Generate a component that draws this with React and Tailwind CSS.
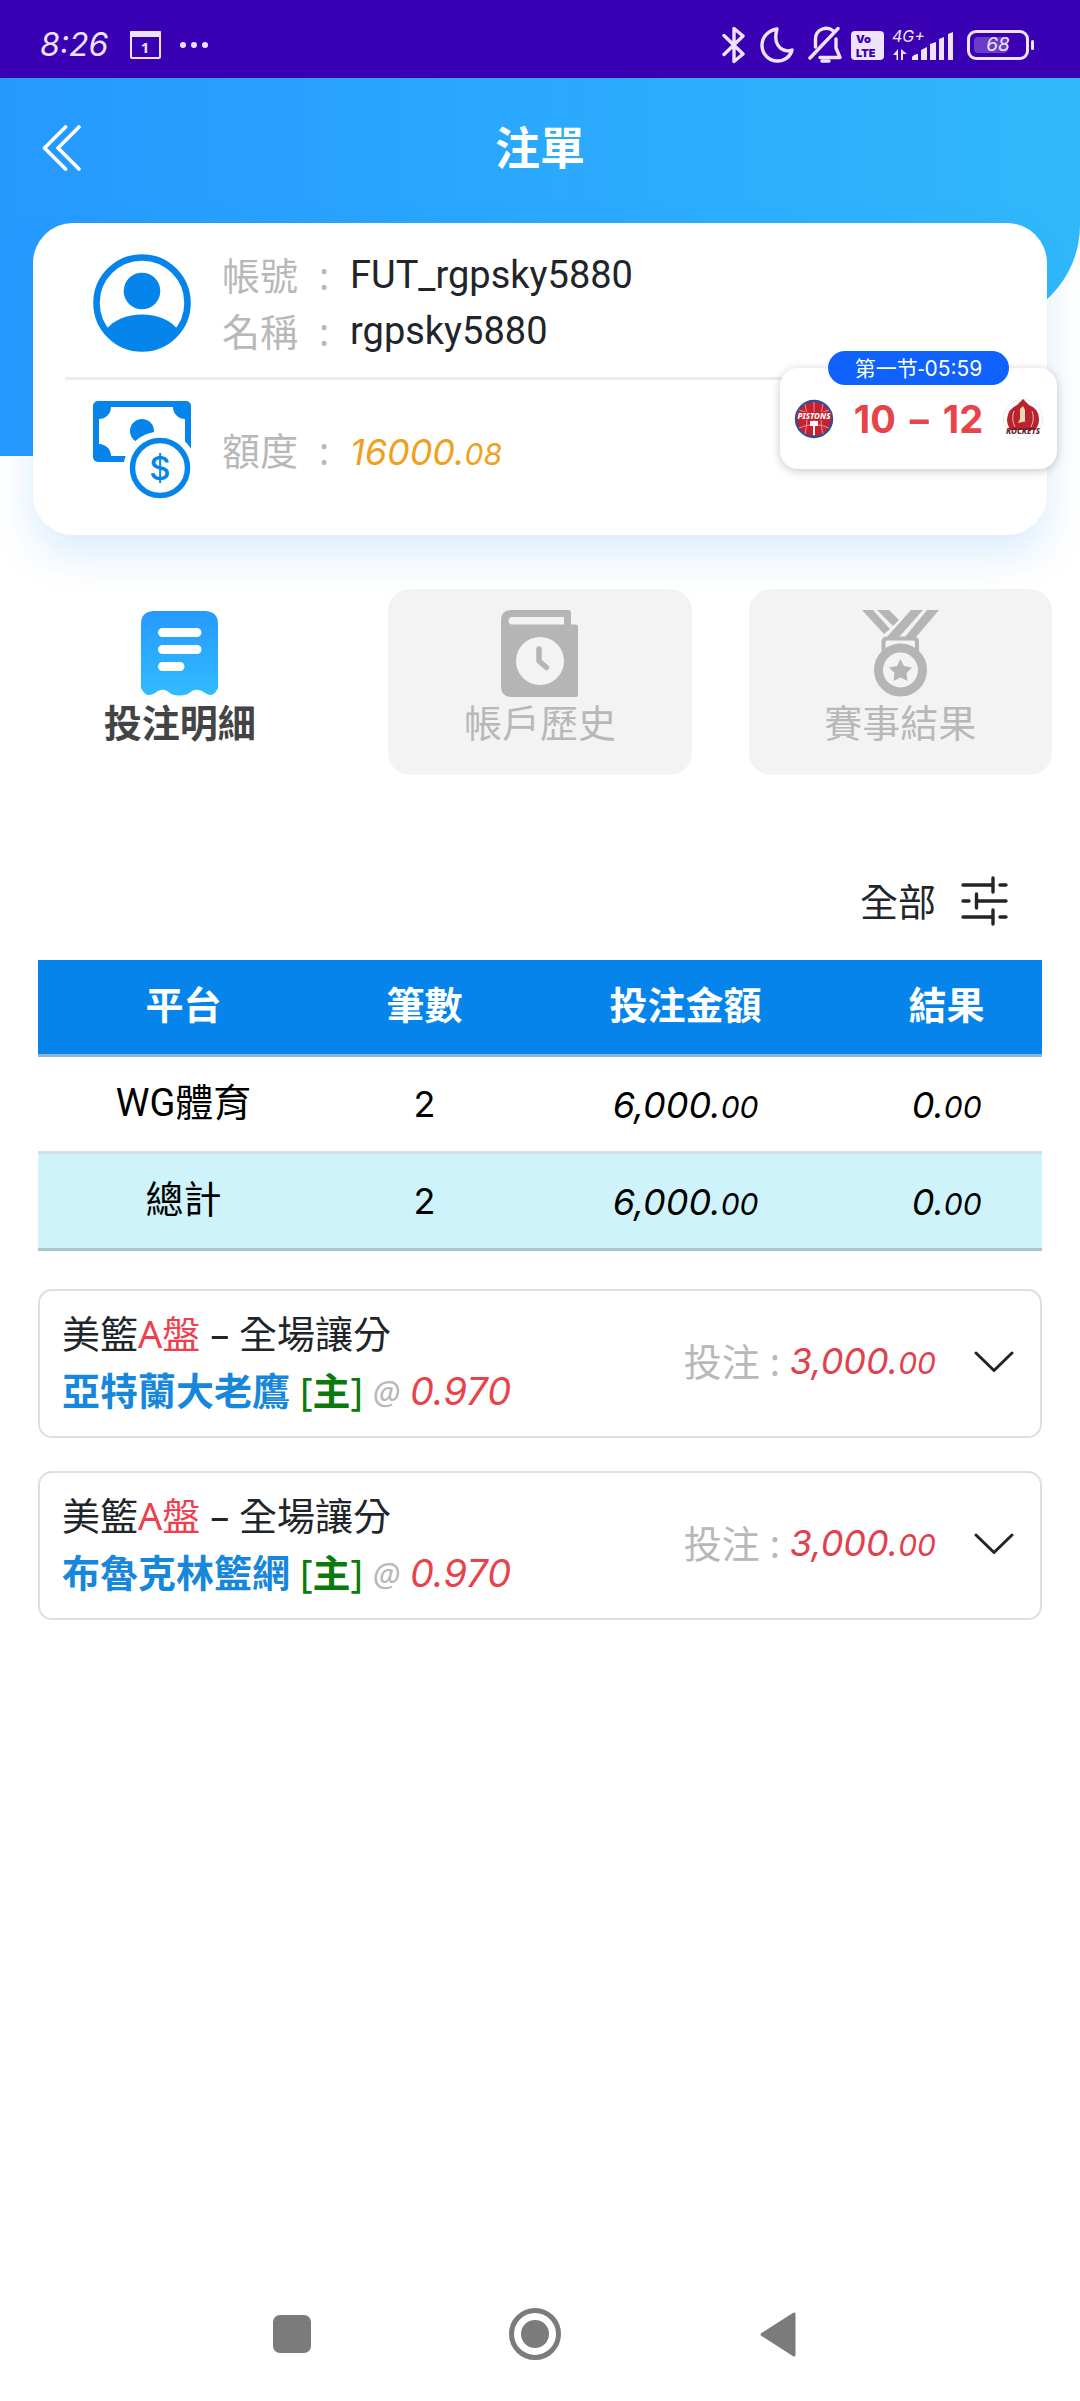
import { useState } from "react"

const tabs = [
    { id: "detail",  label: "投注明細", Icon: ReceiptIcon },
    { id: "history", label: "帳戶歷史", Icon: HistoryIcon },
    { id: "result",  label: "賽事結果", Icon: MedalIcon },
]

const rows = [
    { name: "WG體育", count: 2, amount: "6,000.00", result: "0.00" },
]

const total = { name: "總計", count: 2, amount: "6,000.00", result: "0.00" }

const bets = [
    { id: 1, league: "美籃", market: "A盤", type: "全場讓分", team: "亞特蘭大老鷹", odds: "0.970", stake: "3,000.00" },
    { id: 2, league: "美籃", market: "A盤", type: "全場讓分", team: "布魯克林籃網", odds: "0.970", stake: "3,000.00" },
]

// decimals are printed smaller than the integer part
function Money({ value }) {
    const [whole, cents] = value.split(".")
    return (
        <span className="font-[Inter] text-[36px] italic">
            {whole}.<span className="text-[30px]">{cents}</span>
        </span>
    )
}

function StatusBar() {
    return (
        <div className="h-[78px] pl-10 pr-[46px] pt-[14px] flex items-start justify-between bg-[#3a00b3] text-[#efe3fb]">
            <div className="h-[62px] flex items-center">
                <span className="w-[70px] font-[Inter] text-[32px] leading-[62px] italic">8:26</span>
                <svg className="ml-5 w-[31px] h-7" viewBox="0 0 31 28">
                    <rect x="1" y="1" width="29" height="26" rx="1" fill="none" stroke="currentColor" strokeWidth="2" />
                    <rect x="0" y="0" width="31" height="6" rx="1" fill="currentColor" />
                    <text x="15" y="22" textAnchor="middle" fontSize="15" fontWeight="700" fill="currentColor">1</text>
                </svg>
                <svg className="ml-[18px] w-[30px] h-2" viewBox="0 0 30 8" fill="currentColor">
                    <circle cx="4" cy="4" r="3" />
                    <circle cx="15" cy="4" r="3" />
                    <circle cx="26" cy="4" r="3" />
                </svg>
            </div>
            <div className="h-[62px] flex items-center">
                <svg className="w-6 h-[38px]" viewBox="0 0 24 38" fill="none" stroke="currentColor" strokeWidth="3.4" strokeLinecap="round" strokeLinejoin="round">
                    <path d="M2 9.500 L21 28 L12 35.500 V2.500 L21 10 L2 28.500" />
                </svg>
                <svg className="ml-[14px] w-[34px] h-9" viewBox="0 0 34 36" fill="none" stroke="currentColor" strokeWidth="3.4" strokeLinejoin="round">
                    <path d="M17 2 C8 3.500 2 10 2 18.500 C2 27 9 34 17.500 34 C25 34 30.500 29.500 32 23 C24 26 12 20 17 2 Z" />
                </svg>
                <svg className="ml-[14px] w-[34px] h-[38px]" viewBox="0 0 34 38" fill="none" stroke="currentColor" strokeWidth="3.400" strokeLinecap="round" strokeLinejoin="round">
                    <path d="M25.500 5 C22 2.200 18 1.800 14.500 3 C10 4.600 7.500 8.500 7.500 13 V21" />
                    <path d="M28 13 V22 L32 31.500 H12" />
                    <path d="M2 32 L30 2.500" />
                    <path d="M14 35 H21" />
                </svg>
                <svg className="ml-[9px] w-[33px] h-[29px]" viewBox="0 0 33 29" fontFamily="Inter, sans-serif" fontSize="11" fontWeight="900">
                    <rect width="33" height="29" rx="4" fill="currentColor" />
                    <text x="5" y="12" fill="#3a00b3">Vo</text>
                    <text x="5" y="26" fill="#3a00b3">LTE</text>
                </svg>
                <svg className="ml-2 w-[62px] h-[42px]" viewBox="0 -4 62 42" fill="currentColor">
                    <text x="0" y="14" fontFamily="Inter, sans-serif" fontSize="16" fontStyle="italic">4G+</text>
                    <path d="M6 21 V32 H4.500 V27 L1 27 Z" />
                    <path d="M9 32 V21 L15 26 H11 V32 Z" />
                    <path d="M20 32 V29 Q22 26 26 26 V32 Z" />
                    <path d="M29 32 V22 L35 19 V32 Z" />
                    <path d="M38 32 V16 L44 14 V32 Z" />
                    <path d="M47 32 V11 L52 9 V32 Z" />
                    <path d="M56 32 V6 L61 4 V32 Z" />
                </svg>
                <div className="ml-[13px] w-[62px] h-[30px] p-1 rounded-[9px] border-[3px] border-[#efe3fb] relative">
                    <div className="h-full w-[34px] rounded-[4px] bg-[#6b3cc8]" />
                    <span className="absolute inset-0 font-[Inter] text-center text-[19px] leading-6 italic">68</span>
                </div>
                <div className="ml-[2px] w-[3px] h-[10px] rounded-sm bg-[#efe3fb]" />
            </div>
        </div>
    )
}

function AvatarIcon() {
    return (
        <svg className="w-[98px] h-[98px] shrink-0" viewBox="0 0 98 98">
            <circle cx="49" cy="49" r="45.500" fill="none" stroke="#0585ec" strokeWidth="6.500" />
            <circle cx="49" cy="37" r="18.300" fill="#0585ec" />
            <path d="M13 76 C20 66 34 60.500 49 60.500 C64 60.500 78 66 85 76 C77 89 64 97 49 97 C34 97 21 89 13 76 Z" fill="#0585ec" />
        </svg>
    )
}

function CashIcon() {
    return (
        <svg className="w-[98px] h-[98px] shrink-0" viewBox="0 0 98 98">
            <rect x="0" y="0" width="98" height="61" rx="5" fill="#0585ec" />
            <path d="M18 6 H80 A12 12 0 0 0 92 18 V43 A12 12 0 0 0 80 55 H18 A12 12 0 0 0 6 43 V18 A12 12 0 0 0 18 6 Z" fill="#fff" />
            <circle cx="49" cy="30" r="12" fill="#0585ec" />
            <circle cx="67" cy="67" r="36.500" fill="#fff" />
            <circle cx="67" cy="67" r="27.500" fill="#fff" stroke="#0585ec" strokeWidth="5.500" />
            <text x="67" y="79" textAnchor="middle" fontFamily="Inter, sans-serif" fontSize="33" fontWeight="500" fill="#0585ec">$</text>
        </svg>
    )
}

function ReceiptIcon() {
    return (
        <svg className="w-[77px] h-[87px]" viewBox="0 0 77 87">
            <defs>
                <linearGradient id="receipt" x1="0" y1="0" x2="0" y2="1">
                    <stop offset="0" stopColor="#2699ff" />
                    <stop offset="1" stopColor="#30bcfe" />
                </linearGradient>
            </defs>
            <path d="M12 1 H65 Q77 2 77 14 V78 Q72 89 64 83 Q55 76 47 84 Q38 87 30 84 Q22 76 14 83 Q5 89 0 78 V14 Q0 2 12 1 Z" fill="url(#receipt)" />
            <path d="M21.500 22.500 H56 M21.500 39.500 H56 M21.500 56.500 H39" stroke="#fff" strokeWidth="9" strokeLinecap="round" />
        </svg>
    )
}

function HistoryIcon() {
    return (
        <svg className="w-[77px] h-[87px]" viewBox="0 0 77 87">
            <path d="M10 0 H67 Q70 0 70 3 V14.500 H75 Q77 14.500 77 17 V85 Q77 87 75 87 H10 Q0 86 0 77 V10 Q0 1 10 0 Z" fill="#b5b5b5" />
            <path d="M11 7 H63 V14.500 H11 Q7.500 14 7.500 10.700 Q7.500 7.500 11 7 Z" fill="#f3f3f3" />
            <circle cx="39" cy="51" r="24" fill="#f3f3f3" />
            <path d="M38 39 V51 L45.500 57.500" fill="none" stroke="#b5b5b5" strokeWidth="5.500" strokeLinecap="round" strokeLinejoin="round" />
        </svg>
    )
}

function MedalIcon() {
    return (
        <svg className="w-[77px] h-[87px]" viewBox="0 0 77 87" fill="#b5b5b5">
            <path d="M0 0 H11 L28 19 L22 24 Z" />
            <path d="M15 0 H27 L37 10 L31 16 Z" />
            <path d="M49 0 H61 L37 27 H25 Z" />
            <path d="M65 0 H77 L54 27 H43 Z" />
            <path d="M21.500 42 V32 Q21.500 28.500 25 28.500 H51 Q55 28.500 55 32 V42" fill="none" stroke="#b5b5b5" strokeWidth="4" />
            <circle cx="38.500" cy="60" r="22" fill="#f3f3f3" stroke="#b5b5b5" strokeWidth="9" />
            <path d="M38.500 49 L42 56 L50 57.500 L44.500 63 L45.500 71 L38.500 67.500 L31.500 71 L32.500 63 L27 57.500 L35 56 Z" strokeLinejoin="round" />
        </svg>
    )
}

function PistonsLogo() {
    return (
        <svg className="w-10 h-10" viewBox="0 0 40 40">
            <circle cx="20" cy="20" r="18" fill="#c8202f" stroke="#2f4f93" strokeWidth="2.400" />
            <path d="M20 3 V37 M5 11 Q20 18 35 11 M5 29 Q20 22 35 29 M11 5 Q15 20 11 35 M29 5 Q25 20 29 35" fill="none" stroke="#e9a9ae" strokeWidth="0.8" />
            <rect x="3" y="13" width="34" height="8" fill="#c8202f" />
            <text x="20" y="20" textAnchor="middle" fontSize="8" fontWeight="800" fontStyle="italic" fill="#fff">PISTONS</text>
            <rect x="16" y="22" width="8" height="5" fill="#fff" />
            <rect x="19" y="27" width="2" height="9" fill="#fff" />
        </svg>
    )
}

function RocketsLogo() {
    return (
        <svg className="w-10 h-10" viewBox="0 0 40 40">
            <circle cx="20" cy="20" r="19.500" fill="#fff" stroke="#ececf2" />
            <path d="M20 0 L26 6 Q37 10 36 22 Q35 28 32 31 H8 Q4 27 4 20 Q5 10 14 6 Z" fill="#b9232f" />
            <path d="M11 12 Q8 20 12 28 M29 12 Q32 20 28 28" fill="none" stroke="#e7b7ba" strokeWidth="1" />
            <path d="M17 10 L20 7 L22 11 V22 H24 L15 24 L17 20 Z" fill="#eed9ae" />
            <text x="20" y="35" textAnchor="middle" fontSize="8" fontWeight="800" fontStyle="italic" fill="#5d2029">ROCKETS</text>
        </svg>
    )
}

function InfoLine({ label, children }) {
    return (
        <div className="h-14 flex leading-[56px]">
            <span className="text-[#b8b8b8]">{label}</span>
            <span className="w-[52px] text-center text-[#b8b8b8]">:</span>
            {children}
        </div>
    )
}

function LiveScore() {
    return (
        <a href="#live" className="absolute right-[23px] top-[145px] w-[277px] h-[101px] rounded-[18px] bg-white shadow-[0_2px_10px_rgba(60,60,80,0.28)] flex flex-col items-center">
            <span className="-mt-[17px] w-[181px] h-[34px] rounded-full bg-[#0f62fe] text-white text-center text-[21px] leading-[34px]">
                第一节-<span className="font-[Inter]">05:59</span>
            </span>
            <span className="w-full px-[14px] mt-[14px] flex items-center justify-between">
                <PistonsLogo />
                <span className="flex gap-[14px] font-[Inter] text-[38px] leading-10 font-bold text-[#e8434b]">
                    <span>10</span>
                    <span>–</span>
                    <span>12</span>
                </span>
                <RocketsLogo />
            </span>
        </a>
    )
}

function BetCard({ bet }) {
    const [open, setOpen] = useState(false)
    return (
        <li className="flex items-center justify-between border-2 border-[#dfdfdf] rounded-[14px] pt-[14px] pb-[17px] pl-[22px] pr-[26px] text-[#212529]">
            <div className="leading-[57px]">
                <p className="h-[57px]">{bet.league}<span className="text-[#f03e4d]">{bet.market}</span> – {bet.type}</p>
                <p className="h-[57px]">
                    <b className="text-[#1787dc]">{bet.team}</b>{" "}
                    <b className="text-[#0b7a0b]"><span className="font-normal">[</span>主<span className="font-normal">]</span></b>{" "}
                    <span className="text-[#b8b8b8] text-[32px] italic">@</span>{" "}
                    <span className="font-[Inter] text-[38px] text-[#e8434b] italic">{bet.odds}</span>
                </p>
            </div>
            <div className="leading-[57px] flex items-center">
                <span className="text-[#b8b8b8]">投注</span>
                <span className="w-[30px] text-center text-[#b8b8b8]">:</span>
                <span className="text-[#e0414c]"><Money value={bet.stake} /></span>
                <button className="ml-[38px]" aria-label="展開" aria-expanded={open} onClick={() => setOpen(!open)}>
                    <svg className="w-10 h-[22px]" viewBox="0 0 40 22" fill="none" stroke="#212529" strokeWidth="3" strokeLinecap="round" strokeLinejoin="round">
                        <path d="M2 2 L20 19.500 L38 2" />
                    </svg>
                </button>
            </div>
        </li>
    )
}

export default function App() {
    const [tab, setTab] = useState("detail")

    return (
        <div className="min-h-screen flex flex-col bg-white text-[38px] font-['Noto_Sans','Noto_Sans_CJK_TC',sans-serif]">
            <StatusBar />

            {/* HEADER + ACCOUNT */}
            <div className="relative">
                <div className="absolute left-0 top-0 w-1/3 h-[378px] bg-linear-to-r from-[#2699ff] to-[#2a9ffe]" />
                <div className="absolute inset-x-0 top-0 h-[247px] rounded-br-[100px] bg-linear-to-r from-[#2699ff] to-[#31b8fb]" />

                <header className="relative h-[140px] flex items-center justify-center">
                    <button className="absolute left-[42px]" aria-label="返回">
                        <svg className="w-[39px] h-[46px]" viewBox="0 0 39 46" fill="none" stroke="#fff" strokeWidth="3.600" strokeLinecap="round" strokeLinejoin="round">
                            <path d="M23.500 2 L2.500 23 L23.500 44" />
                            <path d="M37 2 L16 23 L37 44" />
                        </svg>
                    </button>
                    <h1 className="text-[45px] font-bold text-white">注單</h1>
                </header>

                <div className="relative mt-[5px]">
                    <section className="mx-[33px] px-8 rounded-[40px] bg-white shadow-[0_20px_40px_rgba(38,140,240,0.17)]">
                        <div className="flex items-center pt-6 pb-[18px] px-7 border-b-[3px] border-[#ececec]">
                            <AvatarIcon />
                            <div className="ml-[31px]">
                                <InfoLine label="帳號"><span className="font-[Roboto] text-[#212529]">FUT_rgpsky5880</span></InfoLine>
                                <InfoLine label="名稱"><span className="font-[Roboto] text-[#212529]">rgpsky5880</span></InfoLine>
                            </div>
                        </div>
                        <div className="flex items-center pt-[21px] pb-9 px-7">
                            <CashIcon />
                            <div className="ml-[31px]">
                                <InfoLine label="額度"><span className="text-[#f0a01e]"><Money value="16000.08" /></span></InfoLine>
                            </div>
                        </div>
                    </section>
                    <LiveScore />
                </div>
            </div>

            {/* TABS */}
            <nav className="mt-[54px] px-7 grid grid-cols-3 gap-[57px]">
                {tabs.map(({ id, label, Icon }) => (
                    <button
                        key={id}
                        onClick={() => setTab(id)}
                        className={
                            "h-[186px] pt-[21px] rounded-[22px] flex flex-col items-center " +
                            (tab === id ? "bg-white font-bold text-[#444]" : "bg-[#f3f3f3] text-[#b8b8b8]")
                        }
                    >
                        <Icon />
                        <span className="leading-[50px]">{label}</span>
                    </button>
                ))}
            </nav>

            {/* FILTER */}
            <div className="mt-[101px] pr-[72px] flex justify-end">
                <button className="flex items-center gap-[25px] leading-[50px] text-[#212529]">
                    全部
                    <svg className="w-[47px] h-[50px]" viewBox="0 0 47 50" fill="none" stroke="currentColor" strokeWidth="3.400" strokeLinecap="round">
                        <path d="M2 9 H32 M32 2 V16 M39 9 H45" />
                        <path d="M2 25 H8 M15.500 18 V32 M15.500 25 H45" />
                        <path d="M2 41 H32 M32 34 V48 M39 41 H45" />
                    </svg>
                </button>
            </div>

            {/* SUMMARY */}
            <div className="mt-[34px] px-[38px]">
                <table className="w-full table-fixed text-center text-black">
                    <colgroup>
                        <col className="w-[29%]" />
                        <col className="w-[19%]" />
                        <col className="w-[33%]" />
                        <col className="w-[19%]" />
                    </colgroup>
                    <thead>
                        <tr className="h-[95px] bg-[#0585ec] text-white border-b-[3px] border-[#8fb5d9]">
                            <th className="pb-1">平台</th>
                            <th className="pb-1">筆數</th>
                            <th className="pb-1">投注金額</th>
                            <th className="pb-1">結果</th>
                        </tr>
                    </thead>
                    <tbody>
                        {rows.map(r => (
                            <tr key={r.name} className="h-[97px] border-b-[3px] border-[#d0e0e5]">
                                <td className="font-['Roboto','Noto_Sans_CJK_TC',sans-serif]">{r.name}</td>
                                <td className="font-[Inter] text-[36px]">{r.count}</td>
                                <td><Money value={r.amount} /></td>
                                <td><Money value={r.result} /></td>
                            </tr>
                        ))}
                    </tbody>
                    <tfoot>
                        <tr className="h-[97px] bg-[#cff3fb] border-b-[3px] border-[#a9c4cb]">
                            <td className="pb-1">{total.name}</td>
                            <td className="font-[Inter] text-[36px]">{total.count}</td>
                            <td><Money value={total.amount} /></td>
                            <td><Money value={total.result} /></td>
                        </tr>
                    </tfoot>
                </table>
            </div>

            {/* BETS */}
            <ul className="mt-[38px] px-[38px] flex flex-col gap-[33px]">
                {bets.map(b => <BetCard key={b.id} bet={b} />)}
            </ul>

            {/* SYSTEM NAV */}
            <div className="mt-auto h-[134px] pl-[170px] pr-[180px] grid grid-cols-3 place-items-center">
                <button aria-label="最近" className="w-[38px] h-[38px] rounded-[7px] bg-[#7b7b7b]" />
                <button aria-label="主頁" className="w-[52px] h-[52px] p-[7px] rounded-full border-[5px] border-[#7b7b7b]">
                    <span className="block w-full h-full rounded-full bg-[#7b7b7b]" />
                </button>
                <button aria-label="上一頁">
                    <svg className="w-9 h-[45px]" viewBox="0 0 36 45" fill="#7b7b7b" stroke="#7b7b7b" strokeWidth="3" strokeLinejoin="round">
                        <path d="M34 2 V43 L2 22.500 Z" />
                    </svg>
                </button>
            </div>
        </div>
    )
}
